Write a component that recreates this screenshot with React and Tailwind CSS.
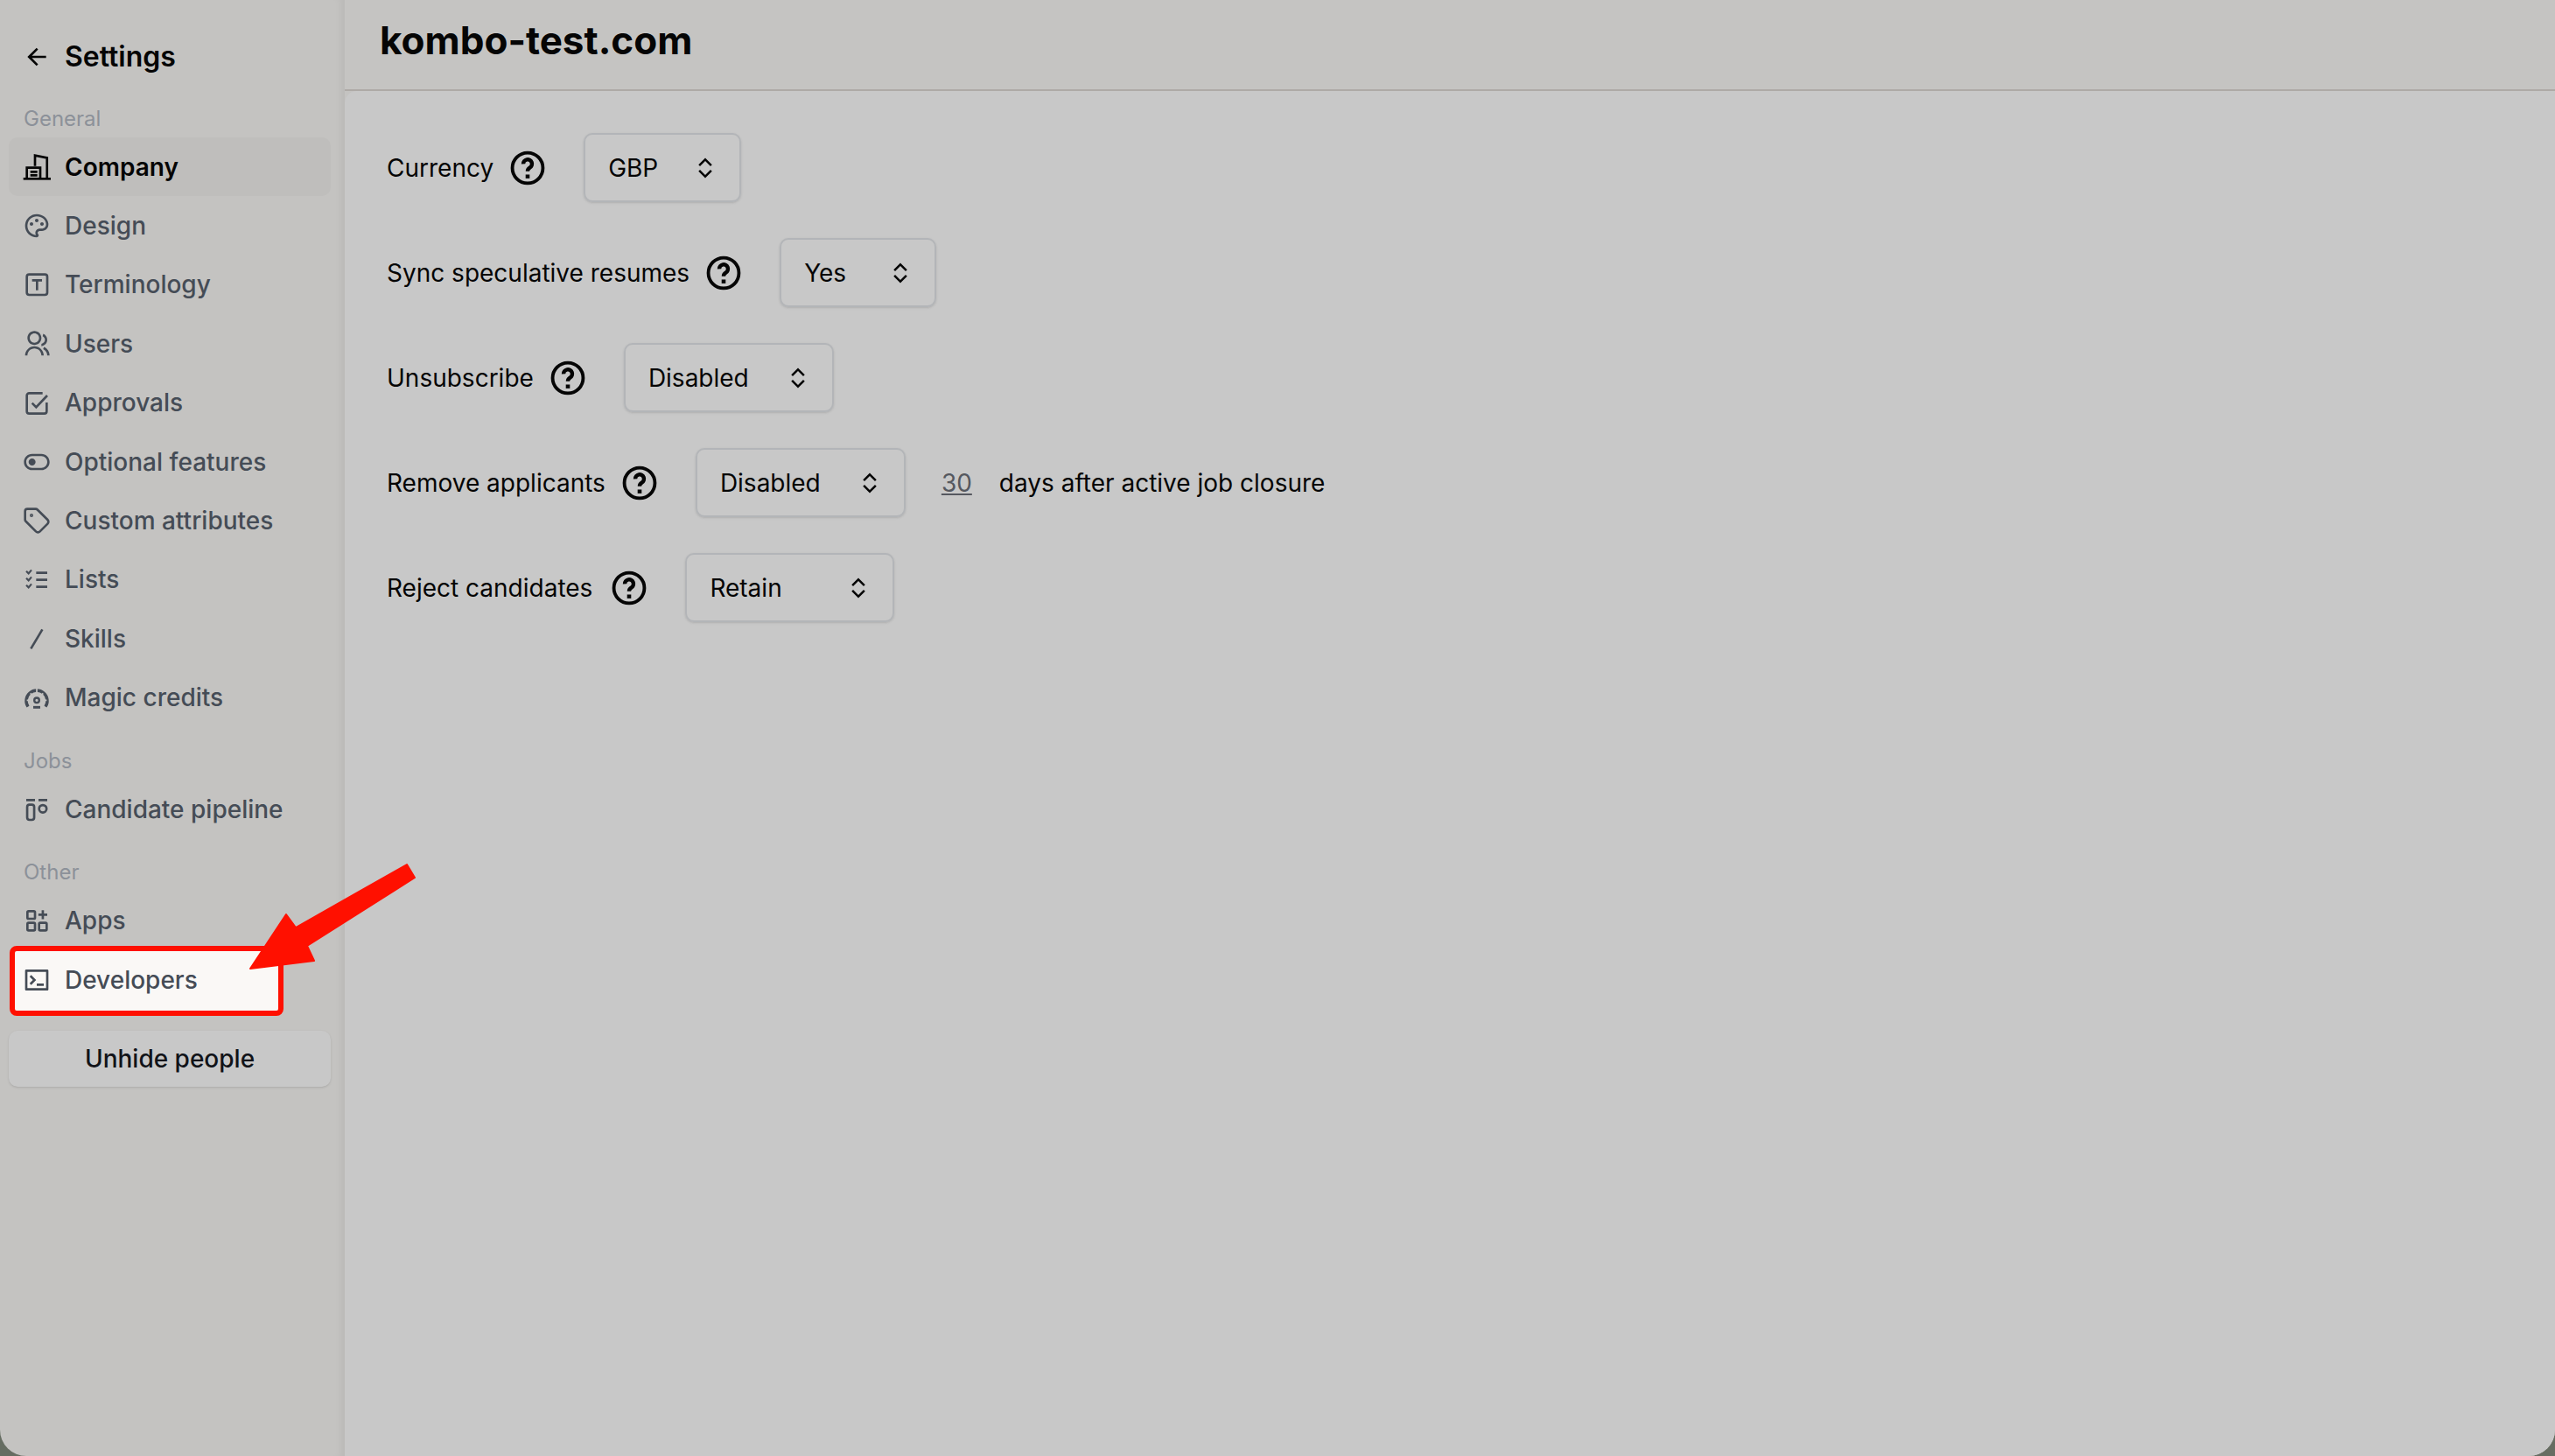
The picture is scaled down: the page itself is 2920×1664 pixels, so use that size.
import {
  RiArrowLeftLine,
  RiPaletteLine,
  RiGroupLine,
  RiToggleLine,
  RiTerminalBoxLine,
  RiExpandUpDownLine,
} from 'react-icons/ri'
import { Tag } from 'lucide-react'

function Glyph({ className, strokeWidth = 2, children }) {
  return (
    <svg viewBox="0 0 24 24" fill="none" stroke="currentColor" strokeWidth={strokeWidth} className={className}>
      {children}
    </svg>
  )
}

function CompanyIcon({ className }) {
  return (
    <Glyph className={className}>
      <path d="M.5 22h23.5" />
      <path d="M10.5 11V2l10.3 2v18" />
      <path d="M3.5 22v-9.5h11.5V22" />
      <path d="M6.5 16h6M6.5 19h6" />
    </Glyph>
  )
}

function TerminologyIcon({ className }) {
  return (
    <Glyph className={className}>
      <rect x="3.5" y="3.5" width="17.5" height="17.5" rx="2" />
      <path d="M8 8.5h8.5M12.25 8.5v8.5" />
    </Glyph>
  )
}

function ApprovalsIcon({ className }) {
  return (
    <Glyph className={className}>
      <path d="M20.5 12v7.5a2 2 0 0 1-2 2h-13a2 2 0 0 1-2-2V6a2 2 0 0 1 2-2H17" />
      <path d="M8 12.5l3.5 3.5L21 6" />
    </Glyph>
  )
}

function ListsIcon({ className }) {
  return (
    <Glyph className={className}>
      <path d="M11.5 6.5H21M11.5 12.5H21M11.5 18.5H21" />
      <path d="M3 5l2 2 2.5-3M3 11l2 2 2.5-3M3 17l2 2 2.5-3" strokeWidth="1.6" />
    </Glyph>
  )
}

function SkillsIcon({ className }) {
  return (
    <Glyph className={className}>
      <path d="M16.8 4 7 20.5" />
    </Glyph>
  )
}

function MagicIcon({ className }) {
  return (
    <Glyph className={className} strokeWidth="2.2">
      <path d="M4.5 20a9 9 0 1 1 15 0" strokeWidth="2.6" />
      <circle cx="12" cy="14.5" r="2.1" strokeWidth="1.8" />
      <path d="M9 20.5h6" />
      <path d="M12 4.5v3.5M6.5 8.5 8.5 10.5M17.5 8.5l-2 2M3.5 14.5H7M20.5 14.5H17" strokeWidth="1.3" stroke="#c4c3c1" />
    </Glyph>
  )
}

function PipelineIcon({ className }) {
  return (
    <Glyph className={className}>
      <path d="M3 4h7.5M13.5 4H21" />
      <rect x="3.8" y="8" width="6" height="13" rx="2" />
      <circle cx="17.2" cy="11.5" r="3.2" />
    </Glyph>
  )
}

function AppsIcon({ className }) {
  return (
    <Glyph className={className}>
      <rect x="4" y="4" width="6.5" height="6.5" rx="1" />
      <rect x="4" y="14" width="6.5" height="6.5" rx="1" />
      <rect x="14" y="14" width="6.5" height="6.5" rx="1" />
      <path d="M17.2 3.2v7.6M13.4 7H21" />
    </Glyph>
  )
}

function HelpIcon() {
  return (
    <svg viewBox="0 0 24 24" fill="none" stroke="currentColor" className="size-[46px] shrink-0 text-[#050505]">
      <circle cx="12" cy="12" r="9.1" strokeWidth="2" />
      <path d="M9.4 9.6a2.6 2.6 0 1 1 3.9 2.2c-.9.6-1.3 1-1.3 1.9v.3" strokeWidth="2.3" />
      <path d="M12 15.9v2.3" strokeWidth="2.4" />
    </svg>
  )
}

const groups = [
  {
    label: 'General',
    items: [
      { name: 'Company', icon: CompanyIcon, active: true },
      { name: 'Design', icon: RiPaletteLine },
      { name: 'Terminology', icon: TerminologyIcon },
      { name: 'Users', icon: RiGroupLine },
      { name: 'Approvals', icon: ApprovalsIcon },
      { name: 'Optional features', icon: RiToggleLine },
      { name: 'Custom attributes', icon: Tag },
      { name: 'Lists', icon: ListsIcon },
      { name: 'Skills', icon: SkillsIcon },
      { name: 'Magic credits', icon: MagicIcon },
    ],
  },
  {
    label: 'Jobs',
    items: [{ name: 'Candidate pipeline', icon: PipelineIcon }],
  },
  {
    label: 'Other',
    items: [{ name: 'Apps', icon: AppsIcon }],
  },
]

function NavItem({ item }) {
  const Icon = item.icon
  return (
    <div
      className={`flex h-[67.4px] items-center gap-[16px] rounded-[10px] pl-[16px] text-[28px] ${
        item.active ? 'bg-[#bfbebc] font-semibold text-[#050505]' : 'font-medium text-[#454c56]'
      }`}
    >
      <Icon className="size-[32px] shrink-0" />
      <span>{item.name}</span>
    </div>
  )
}

function Select({ value, width }) {
  return (
    <div
      className={`flex h-[79px] items-center justify-between rounded-[10px] border-2 border-[#b3b5b8] pl-[26px] pr-[24px] shadow-sm ${width}`}
    >
      <span>{value}</span>
      <RiExpandUpDownLine className="size-[30px]" />
    </div>
  )
}

function Row({ label, children }) {
  return (
    <div className="flex items-center">
      {label}
      <span className="ml-[16px] mr-[41px]">
        <HelpIcon />
      </span>
      {children}
    </div>
  )
}

export default function App() {
  return (
    <div className="h-screen w-full bg-[#666d62]">
      <div
        className="relative flex h-full w-full overflow-hidden rounded-b-[30px] bg-[#c4c3c1] text-[#050505]"
        style={{ fontFamily: 'Inter, sans-serif' }}
      >
        <aside className="flex w-[394px] shrink-0 flex-col border-r-2 border-[#bcbbb9] pl-[10px] pr-[14px] shadow-[inset_-8px_0_8px_-6px_rgba(0,0,0,0.05)]">
          <div className="flex h-[130px] items-center gap-[16px] pl-[16px] text-[32px] font-semibold">
            <RiArrowLeftLine className="size-[32px]" />
            <span>Settings</span>
          </div>
          {groups.map((group) => (
            <div key={group.label}>
              <div className="mb-[7px] mt-[-8px] pl-[17px] text-[24px] leading-[28px] text-[#8c9199]">{group.label}</div>
              {group.items.map((item) => (
                <NavItem key={item.name} item={item} />
              ))}
              <div className="h-[33px]" />
            </div>
          ))}
          <div className="mt-[-38px]">
            <div className="ml-[1px] flex h-[80px] w-[313px] items-center gap-[16px] rounded-[8px] border-[6px] border-[#ff1000] bg-[#faf8f6] pb-[2px] pl-[9px] text-[28px] font-medium text-[#454c56]">
              <RiTerminalBoxLine className="size-[32px] shrink-0" />
              <span>Developers</span>
            </div>
            <button className="mt-[17px] h-[64px] w-full rounded-[10px] bg-[#c8c8c8] text-center text-[28px] font-medium text-[#111318] shadow-sm">
              Unhide people
            </button>
          </div>
        </aside>

        <main className="flex min-w-0 flex-1 flex-col">
          <header className="flex h-[104px] items-start border-b-2 border-[#aeaaa6] bg-[#c5c4c2] pl-[40px] pt-[20px] text-[44px] font-bold leading-[52px]">
            kombo-test.com
          </header>
          <div className="flex flex-1 flex-col gap-[41px] rounded-tl-[14px] bg-[#c8c8c8] pl-[48px] pt-[48px] text-[28px]">
            <Row label={<span>Currency</span>}>
              <Select value="GBP" width="w-[180px]" />
            </Row>
            <Row label={<span>Sync speculative resumes</span>}>
              <Select value="Yes" width="w-[179px]" />
            </Row>
            <Row label={<span>Unsubscribe</span>}>
              <Select value="Disabled" width="w-[240px]" />
            </Row>
            <Row label={<span>Remove applicants</span>}>
              <Select value="Disabled" width="w-[240px]" />
              <span className="ml-[41px] text-[#55585f] underline">30</span>
              <span className="ml-[31px]">days after active job closure</span>
            </Row>
            <Row label={<span className="pr-[3px]">Reject candidates</span>}>
              <Select value="Retain" width="w-[239px]" />
            </Row>
          </div>
        </main>

        <svg className="pointer-events-none absolute left-[280px] top-[980px] h-[135px] w-[200px]" viewBox="280 980 200 135">
          <path
            d="M465 988 474 1003 351 1081 359 1098 286 1107 327 1045 338 1060Z"
            fill="#ff1000"
            stroke="#ff1000"
            strokeWidth="2"
            strokeLinejoin="round"
          />
        </svg>
      </div>
    </div>
  )
}
